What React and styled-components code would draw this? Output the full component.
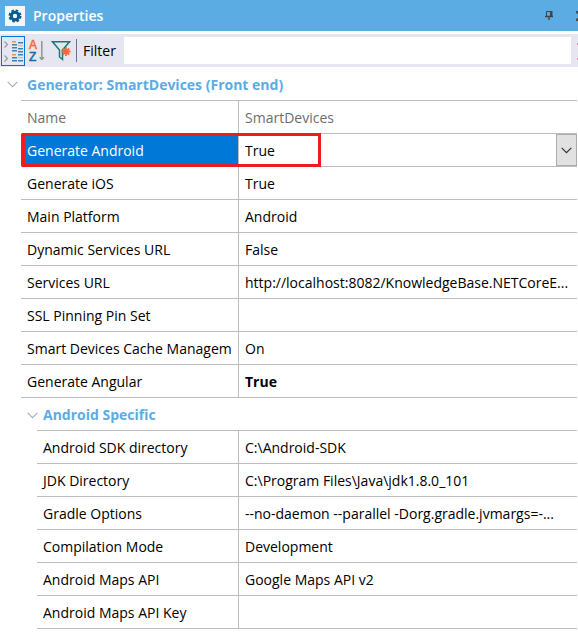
import React, { useState } from "react";
import styled, { createGlobalStyle } from "styled-components";

const line = "#bdbdbd";
const accent = "#5cace4";

const GlobalStyle = createGlobalStyle`
  *, *::before, *::after { box-sizing: border-box; }
  body {
    margin: 0;
    background: #fff;
    color: #000;
    font: 14px/20px "Open Sans", "Noto Sans", sans-serif;
    overflow-x: hidden;
  }
  button, input, select { font: inherit; color: inherit; }
`;

const Panel = styled.main`
  display: flex;
  flex-direction: column;
  width: 100%;
  overflow: hidden;
`;

const TitleBar = styled.header`
  display: flex;
  align-items: center;
  height: 31px;
  padding-left: 5px;
  background: ${accent};
  color: #fff;
`;

const Title = styled.h1`
  flex: 1;
  margin: 0 0 0 8px;
  font-size: 14px;
  line-height: 20px;
  font-weight: 600;
`;

const TitleButton = styled.button`
  flex: none;
  display: flex;
  padding: 0;
  border: 0;
  background: none;
  margin-right: ${(p) => (p.$edge ? "-8px" : "22px")};
`;

const Toolbar = styled.div`
  display: flex;
  align-items: center;
  height: 33px;
  margin-top: 3px;
  padding: 0 0 0 1px;
  background: #e6e6f0;
`;

const ToolButton = styled.button`
  flex: none;
  display: flex;
  align-items: center;
  justify-content: center;
  width: 24px;
  height: 30px;
  padding: 0;
  border: 1px solid ${(p) => (p.$active ? "#0078d7" : "transparent")};
  background: none;
`;

const Divider = styled.span`
  flex: none;
  width: 1px;
  height: 23px;
  margin-left: 3px;
  background: #6b7098;
`;

const FilterLabel = styled.label`
  flex: none;
  width: 47px;
  padding-left: 6px;
`;

const FilterInput = styled.input`
  flex: 1;
  min-width: 0;
  height: 27px;
  padding: 0 6px;
  border: 0;
  outline: 0;
  background: #fff;
`;

const EdgeMarks = styled.svg`
  flex: none;
  margin-left: 5px;
  margin-right: -5px;
`;

const Section = styled.section`
  padding-left: ${(p) => (p.$nested ? "16px" : "0")};
`;

const SectionHeading = styled.h2`
  margin: 0;
  font-size: 14px;
  line-height: 20px;
  font-weight: 700;
`;

const SectionToggle = styled.button`
  display: flex;
  align-items: center;
  gap: ${(p) => (p.$nested ? "5px" : "9px")};
  height: ${(p) => (p.$nested ? "32px" : "33px")};
  padding: 2px 0 0 ${(p) => (p.$nested ? "11px" : "7px")};
  border: 0;
  background: none;
  color: ${accent};
  font-weight: 700;
`;

const Grid = styled.table`
  table-layout: fixed;
  width: calc(100% - 22px);
  margin-left: 21px;
  border-collapse: separate;
  border-spacing: 0;
  border-bottom: 1px solid ${line};
`;

const NameColumn = styled.col`
  width: ${(p) => (p.$nested ? "201px" : "217px")};
`;

const Row = styled.tr`
  height: 33px;
  color: ${(p) => (p.$muted ? "#6d6d6d" : "#000")};
`;

const NameCell = styled.th`
  position: relative;
  padding: 2px 0 0 6px;
  border-top: 1px solid ${line};
  text-align: left;
  font-weight: 400;
  white-space: nowrap;
  color: ${(p) => (p.$selected ? "#fff" : "inherit")};
  background: ${(p) => (p.$selected ? "#0078d7" : "none")};
`;

const ValueCell = styled.td`
  padding: ${(p) => (p.$flush ? "0 0 0 6px" : "2px 4px 0 6px")};
  border-top: 1px solid ${line};
  border-left: 1px solid ${line};
  overflow: hidden;
  text-overflow: ellipsis;
  white-space: nowrap;
  font-weight: ${(p) => (p.$bold ? 700 : 400)};
`;

const SelectWrap = styled.div`
  display: grid;
  grid-template-columns: 1fr 21px;
  height: 32px;
`;

const ValueSelect = styled.select`
  grid-area: 1 / 1 / 2 / 3;
  width: 100%;
  padding: 2px 0 0;
  border: 0;
  outline: 0;
  appearance: none;
  background: transparent;
`;

const DropArrow = styled.span`
  grid-area: 1 / 2;
  display: flex;
  align-items: center;
  justify-content: center;
  border: 1px solid #adadad;
  background: #e1e1e1;
  pointer-events: none;
`;

const Highlight = styled.span`
  position: absolute;
  z-index: 1;
  top: -1px;
  left: 1px;
  width: 299px;
  height: 34px;
  border: 3px solid #ed1c24;
  pointer-events: none;
`;

const Chevron = ({ color }) => (
  <svg width="11" height="7" viewBox="0 0 11 7" fill="none" stroke={color} aria-hidden="true">
    <path d="M.7.8 5.5 5.6 10.3.8" strokeWidth="1.2" />
  </svg>
);

const GearIcon = () => (
  <svg width="20" height="20" viewBox="0 0 20 20" aria-hidden="true">
    <path fill="#f3f5f7" d="M0 0h20v20H0z" />
    <circle cx="10" cy="10" r="3.7" fill="none" stroke="#075b8f" strokeWidth="3" />
    <circle cx="10" cy="10" r="5.6" fill="none" stroke="#075b8f" strokeWidth="1.8" strokeDasharray="2.6 1.8" />
  </svg>
);

const PinIcon = () => (
  <svg width="10" height="11" viewBox="0 0 10 11" fill="none" stroke="#444" aria-hidden="true">
    <path d="M2.5 6V1.5h4V6" strokeWidth="1" />
    <path d="M7.5 1v5" strokeWidth="2" />
    <path d="M1 6.5h8M5 6.5V10" strokeWidth="1.4" />
  </svg>
);

const CloseIcon = () => (
  <svg width="10" height="10" viewBox="0 0 10 10" fill="none" stroke="#444" strokeWidth="2" aria-hidden="true">
    <path d="m0 0 10 10M10 0 0 10" />
  </svg>
);

const CategoryIcon = () => (
  <svg width="22" height="28" viewBox="0 0 22 28" aria-hidden="true">
    <path d="m2.5 4.5 3 3-3 3m0 8 3 3-3 3" fill="none" stroke="#999" strokeWidth="1.2" />
    <path d="M10 4h4v1.5h-4zM10 17h4v1.5h-4z" fill="#f7941d" />
    <path d="M16 8h5v1.2h-5zM16 20h5v1.2h-5z" fill="#f7b36a" />
    <path d="M10 7h5v1.4h-5zM10 10h5v1.4h-5zM10 13h5v1.4h-5zM10 20h5v1.4h-5zM10 23h5v1.4h-5z" fill="#3583b8" />
    <path d="M16 5h5v1.4h-5zM16 11h5v1.4h-5zM16 14h5v1.4h-5zM16 17h5v1.4h-5zM16 23h5v1.4h-5z" fill="#3583b8" />
  </svg>
);

const SortIcon = () => (
  <svg width="18" height="26" viewBox="0 0 18 26" aria-hidden="true">
    <g fontFamily="Liberation Sans, sans-serif" fontSize="12" strokeWidth=".5">
      <text x="1" y="11" fill="#f9653a" stroke="#f9653a">A</text>
      <text x="1" y="23" fill="#1769aa" stroke="#1769aa">Z</text>
    </g>
    <path d="M13 3h1.6v16h1.6v1l-1.6 2H13l-1.6-2v-1H13z" fill="#999" />
  </svg>
);

const FilterIcon = () => (
  <svg width="20" height="22" viewBox="0 0 20 22" fill="none" aria-hidden="true">
    <path d="M1.5 1.8h17L11.5 10v9.5L8.5 17v-7z" stroke="#177a75" strokeWidth="1.5" />
    <path d="M15 7v9m-4.5-4.5h9m-7.7-3.2 6.4 6.4m0-6.4-6.4 6.4" stroke="#f9653a" strokeWidth="1.8" />
  </svg>
);

const sections = [
  {
    title: "Generator: SmartDevices (Front end)",
    rows: [
      { name: "Name", value: "SmartDevices", muted: true },
      { name: "Generate Android", value: "True", selected: true },
      { name: "Generate iOS", value: "True" },
      { name: "Main Platform", value: "Android" },
      { name: "Dynamic Services URL", value: "False" },
      { name: "Services URL", value: "http://localhost:8082/KnowledgeBase.NETCoreE..." },
      { name: "SSL Pinning Pin Set", value: "" },
      { name: "Smart Devices Cache Managem", value: "On" },
      { name: "Generate Angular", value: "True", bold: true },
    ],
  },
  {
    title: "Android Specific",
    nested: true,
    rows: [
      { name: "Android SDK directory", value: "C:\\Android-SDK" },
      { name: "JDK Directory", value: "C:\\Program Files\\Java\\jdk1.8.0_101" },
      { name: "Gradle Options", value: "--no-daemon --parallel -Dorg.gradle.jvmargs=-..." },
      { name: "Compilation Mode", value: "Development" },
      { name: "Android Maps API", value: "Google Maps API v2" },
      { name: "Android Maps API Key", value: "" },
    ],
  },
];

function PropertyRow({ row }) {
  return (
    <Row $muted={row.muted}>
      <NameCell scope="row" $selected={row.selected}>
        {row.selected ? <label htmlFor="selected-value">{row.name}</label> : row.name}
        {row.selected && <Highlight />}
      </NameCell>
      <ValueCell $bold={row.bold} $flush={row.selected}>
        {row.selected ? (
          <SelectWrap>
            <ValueSelect id="selected-value" defaultValue={row.value}>
              <option>True</option>
              <option>False</option>
            </ValueSelect>
            <DropArrow><Chevron color="#333" /></DropArrow>
          </SelectWrap>
        ) : row.value}
      </ValueCell>
    </Row>
  );
}

function PropertySection({ section }) {
  const [open, setOpen] = useState(true);
  return (
    <Section $nested={section.nested}>
      <SectionHeading>
        <SectionToggle $nested={section.nested} aria-expanded={open} onClick={() => setOpen(!open)}>
          <Chevron color="#a2b2be" />
          {section.title}
        </SectionToggle>
      </SectionHeading>
      {open && (
        <Grid>
          <colgroup>
            <NameColumn $nested={section.nested} />
            <col />
          </colgroup>
          <tbody>
            {section.rows.map((row) => <PropertyRow key={row.name} row={row} />)}
          </tbody>
        </Grid>
      )}
    </Section>
  );
}

export default function App() {
  return (
    <>
      <GlobalStyle />
      <Panel>
        <TitleBar>
          <GearIcon />
          <Title>Properties</Title>
          <TitleButton aria-label="Pin panel"><PinIcon /></TitleButton>
          <TitleButton $edge aria-label="Close panel"><CloseIcon /></TitleButton>
        </TitleBar>
        <Toolbar>
          <ToolButton $active aria-label="Group by category"><CategoryIcon /></ToolButton>
          <ToolButton aria-label="Sort alphabetically"><SortIcon /></ToolButton>
          <ToolButton aria-label="Show modified only"><FilterIcon /></ToolButton>
          <Divider />
          <FilterLabel htmlFor="filter">Filter</FilterLabel>
          <FilterInput id="filter" />
          <EdgeMarks width="7" height="20" viewBox="0 0 7 20" aria-hidden="true">
            <path d="M1 2h6v2H1zM1 17h6v2H1z" fill="#d889ad" />
          </EdgeMarks>
        </Toolbar>
        {sections.map((section) => <PropertySection key={section.title} section={section} />)}
      </Panel>
    </>
  );
}
